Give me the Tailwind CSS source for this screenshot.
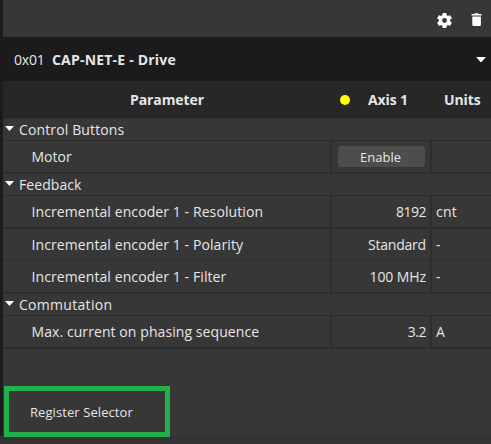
<!DOCTYPE html>
<html lang="en">
<head>
<meta charset="utf-8">
<title>Drive registers</title>
<script src="https://cdn.jsdelivr.net/npm/@tailwindcss/browser@4"></script>
</head>
<body class="w-[491px] h-[444px] overflow-hidden bg-[#333333] font-['Open_Sans','Noto_Sans',sans-serif] text-[14px] leading-[20px] text-[#e6e6e6] whitespace-nowrap">
<main class="relative h-[436px] border-l-3 border-[#1c1c1c] bg-[#373737]">
  <header class="flex h-[37px] items-start justify-end gap-[18px] pt-[12px] pr-[8px]">
    <svg class="mt-px h-[15px] w-[15px]" viewBox="2 2 20 20" fill="#fff"><path d="M19.43 12.98c.04-.32.07-.64.07-.98s-.03-.66-.07-.98l2.11-1.65c.19-.15.24-.42.12-.64l-2-3.46c-.12-.22-.39-.3-.61-.22l-2.49 1c-.52-.4-1.08-.73-1.69-.98l-.38-2.65A.49.49 0 0 0 14 2h-4c-.25 0-.46.18-.49.42l-.38 2.65c-.61.25-1.17.59-1.69.98l-2.49-1c-.23-.09-.49 0-.61.22l-2 3.46c-.13.22-.07.49.12.64l2.11 1.65c-.04.32-.07.65-.07.98s.03.66.07.98l-2.11 1.65c-.19.15-.24.42-.12.64l2 3.46c.12.22.39.3.61.22l2.49-1c.52.4 1.08.73 1.69.98l.38 2.65c.03.24.24.42.49.42h4c.25 0 .46-.18.49-.42l.38-2.65c.61-.25 1.17-.59 1.69-.98l2.49 1c.23.09.49 0 .61-.22l2-3.46c.12-.22.07-.49-.12-.64zM12 15.2a3.2 3.2 0 1 1 0-6.4 3.2 3.2 0 0 1 0 6.4z"/></svg>
    <svg class="h-[15px] w-[13px]" viewBox="0 0 13 15" fill="#fff"><path d="M2.3 4.5h8.6v8.2q0 1.4-1.4 1.4H3.7q-1.4 0-1.4-1.4zM1.6 2H4.4l.7-.8h3l.7.8h2.8v1.4H1.6z"/></svg>
  </header>
  <div class="-ml-[3px] flex h-[44px] items-center bg-[#1b1b1b] pt-px pl-[14px] pr-[5px]">
    <span class="w-[38px] tracking-[-0.2px]">0x01</span>
    <span class="font-bold tracking-[0.2px]">CAP-NET-E - Drive</span>
    <svg class="ml-auto h-[6px] w-[10px]" viewBox="0 0 10 6" fill="#fff"><path d="M0 0h10L5 5.6z"/></svg>
  </div>
  <div class="grid h-[38px] grid-cols-[328px_100px_60px] items-center border-b border-[#2e2e2e] bg-[#272727] pt-px font-bold">
    <span class="text-center tracking-[-0.1px]">Parameter</span>
    <span class="flex items-center pl-[9px]"><i class="mr-[18px] mb-px size-[10px] rounded-full bg-[#ffff00]"></i><span class="tracking-[-0.1px]">Axis 1</span></span>
    <span class="pl-[13px] tracking-[-0.1px]">Units</span>
  </div>

  <div class="flex h-[22px] items-center gap-[5px] border-b border-[#2b2b2b] pl-[2px]"><svg class="mb-[3px] h-[5px] w-[9px]" viewBox="0 0 9 5" fill="#fff"><path d="M0 0h9L4.5 5z"/></svg><span class="tracking-[0.13px]">Control Buttons</span></div>
  <div class="grid h-[33px] grid-cols-[329px_100px_59px] border-b-2 border-[#2d2d2d] leading-[32px]">
    <span class="border-r-2 border-[#2e2e2e] pl-[28.5px]">Motor</span>
    <span class="border-r-2 border-[#2e2e2e] pl-[6px] pt-[5px]"><button class="block h-[21px] w-[87px] rounded-[3px] bg-[#4d4d4d] pr-[2px] text-[13px] leading-[22px]">Enable</button></span>
    <span></span>
  </div>
  <div class="flex h-[22px] items-center gap-[5px] border-b border-[#2b2b2b] pl-[2px]"><svg class="mb-[3px] h-[5px] w-[9px]" viewBox="0 0 9 5" fill="#fff"><path d="M0 0h9L4.5 5z"/></svg><span class="tracking-[0.07px]">Feedback</span></div>
  <div class="grid h-[33px] grid-cols-[329px_100px_59px] border-b-2 border-[#2d2d2d] leading-[32px]">
    <span class="border-r-2 border-[#2e2e2e] pl-[28.5px] tracking-[0.09px]">Incremental encoder 1 - Resolution</span>
    <span class="border-r-2 border-[#2e2e2e] pr-[4px] text-right tracking-[-0.5px]">8192</span>
    <span class="pl-[4px] tracking-[0.2px]">cnt</span>
  </div>
  <div class="grid h-[32px] grid-cols-[329px_100px_59px] border-b border-[#2d2d2d] leading-[31px]">
    <span class="border-r-2 border-[#2e2e2e] pl-[28.5px] tracking-[0.09px]">Incremental encoder 1 - Polarity</span>
    <span class="border-r-2 border-[#2e2e2e] pr-[4px] text-right tracking-[-0.2px]">Standard</span>
    <span class="pl-[4px]">-</span>
  </div>
  <div class="grid h-[33px] grid-cols-[329px_100px_59px] border-b-2 border-[#2d2d2d] leading-[31px]">
    <span class="border-r-2 border-[#2e2e2e] pl-[28.5px] tracking-[0.09px]">Incremental encoder 1 - Filter</span>
    <span class="border-r-2 border-[#2e2e2e] pr-[4px] text-right tracking-[-0.1px]">100 MHz</span>
    <span class="pl-[4px]">-</span>
  </div>
  <div class="flex h-[22px] items-center gap-[5px] border-b border-[#2b2b2b] pl-[2px]"><svg class="mb-[3px] h-[5px] w-[9px]" viewBox="0 0 9 5" fill="#fff"><path d="M0 0h9L4.5 5z"/></svg><span class="tracking-[0.3px]">Commutation</span></div>
  <div class="grid h-[33px] grid-cols-[329px_100px_59px] border-b-2 border-[#2d2d2d] leading-[32px]">
    <span class="border-r-2 border-[#2e2e2e] pl-[28.5px] tracking-[0.08px]">Max. current on phasing sequence</span>
    <span class="border-r-2 border-[#2e2e2e] pr-[4px] text-right tracking-[-0.5px]">3.2</span>
    <span class="pl-[4px]">A</span>
  </div>
  <div class="absolute left-[1px] top-[386px] flex h-[51px] w-[166px] items-center border-5 border-[#22b14c] pl-[21px] text-[13px] tracking-[0.08px]">Register Selector</div>
</main>
</body>
</html>
